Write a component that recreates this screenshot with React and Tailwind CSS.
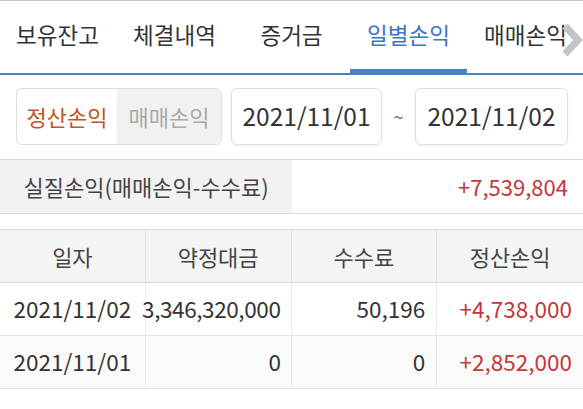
export default function App() {
  const tabs = ['보유잔고', '체결내역', '증거금', '일별손익', '매매손익']
  const rows = [
    { date: '2021/11/02', amount: '3,346,320,000', fee: '50,196', pnl: '+4,738,000', bg: 'bg-white' },
    { date: '2021/11/01', amount: '0', fee: '0', pnl: '+2,852,000', bg: 'bg-[#fafafa]' },
  ]
  return (
    <main
      className="w-[583px] h-[409px] overflow-hidden bg-white text-[#333]"
      style={{ fontFamily: '"Noto Sans CJK KR", "Noto Sans", sans-serif' }}
    >
      <div className="relative border-t border-[#c8c8c8] border-b-2 border-b-[#4a80c4] h-[75px] overflow-hidden">
        <div className="flex -ml-px h-full">
          {tabs.map((t, i) => (
            <div
              key={t}
              className={`relative shrink-0 w-[117px] flex items-center justify-center text-[22.5px] pb-[5px] ${
                i === 3 ? 'text-[#3a77c2]' : 'text-[#333]'
              }`}
            >
              {t}
              {i === 3 && <div className="absolute left-0 right-0 bottom-0 h-[4px] bg-[#4a80c4]" />}
            </div>
          ))}
        </div>
        <svg className="absolute right-0 top-[22px]" width="22" height="34" viewBox="0 0 22 34">
          <polyline points="4,3 17,17 4,31" fill="none" stroke="#c4c4c4" strokeWidth="7" />
        </svg>
      </div>

      <div className="flex items-center pl-4 pr-[15px] pt-[13px] pb-[14px] border-b border-[#dcdcdc]">
        <div className="flex h-[57px] w-[206px] rounded-[6px] border border-[#dedede] overflow-hidden">
          <div className="w-[102px] flex items-center justify-center text-[22px] text-[#c2521e] border border-[#dcb5a2] rounded-l-[6px] bg-white -m-px">
            정산손익
          </div>
          <div className="flex-1 flex items-center justify-center text-[22px] text-[#a9a9a9] bg-[#f1f1f1]">
            매매손익
          </div>
        </div>
        <div className="ml-[9px] w-[151px] h-[57px] rounded-[6px] border border-[#dedede] shadow-[0_1px_2px_rgba(0,0,0,0.08)] flex items-center justify-center text-[24.5px]">
          2021/11/01
        </div>
        <div className="w-[33px] text-center text-[18px] text-[#666]">~</div>
        <div className="w-[153px] h-[57px] rounded-[6px] border border-[#dedede] shadow-[0_1px_2px_rgba(0,0,0,0.08)] flex items-center justify-center text-[24.5px]">
          2021/11/02
        </div>
      </div>

      <div className="flex h-[54px] border-b border-[#dcdcdc]">
        <div className="w-[292px] bg-[#f2f2f2] flex items-center justify-center text-[22px] text-[#444]">
          실질손익(매매손익-수수료)
        </div>
        <div className="flex-1 flex items-center justify-end pr-[15px] text-[22px] text-[#c4363a]">
          +7,539,804
        </div>
      </div>

      <div className="mt-[15px] border-t border-[#dcdcdc]">
        <div className="grid grid-cols-4 h-[53px] bg-[#f4f4f4] border-b border-[#d8d8d8] text-[22px] text-[#444]">
          <div className="flex items-center justify-center border-r border-[#e2e2e2]">일자</div>
          <div className="flex items-center justify-center border-r border-[#e2e2e2]">약정대금</div>
          <div className="flex items-center justify-center border-r border-[#e2e2e2]">수수료</div>
          <div className="flex items-center justify-center">정산손익</div>
        </div>
        {rows.map((r) => (
          <div key={r.date} className={`grid grid-cols-4 h-[53px] border-b border-[#e4e4e4] text-[22.5px] ${r.bg}`}>
            <div className="flex items-center justify-center border-r border-[#ececec]">{r.date}</div>
            <div className="flex items-center justify-end pr-[10px] border-r border-[#ececec] tracking-[-0.4px]">{r.amount}</div>
            <div className="flex items-center justify-end pr-[11px] border-r border-[#ececec]">{r.fee}</div>
            <div className="flex items-center justify-end pr-[11px] text-[#c4363a]">{r.pnl}</div>
          </div>
        ))}
      </div>
    </main>
  )
}
